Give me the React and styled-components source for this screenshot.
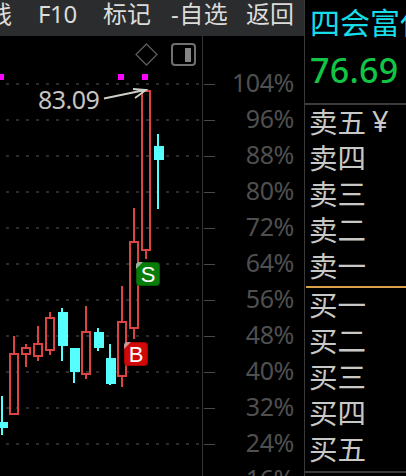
import styled, { createGlobalStyle } from "styled-components";

const GlobalStyle = createGlobalStyle`
    body {
        margin: 0;
        background: #000;
        overflow: hidden;
    }
`
const Screen = styled.div`
    display: grid;
    grid-template-columns: 304px 102px;
    width: 406px;
    height: 476px;
    overflow: hidden;
    background: #000;
    font-family: "Noto Sans", "Noto Sans CJK SC", sans-serif;
`
const Main = styled.main`
    display: flex;
    flex-direction: column;
    min-width: 0;
    height: 476px;
    overflow: hidden;
`
const Toolbar = styled.nav`
    display: flex;
    flex: none;
    box-sizing: border-box;
    height: 36px;
    margin-left: -12px;
    background: #2b2c2d;
`
const ToolItem = styled.span`
    flex: none;
    width: ${props => props.$width}px;
    font-size: 24px;
    line-height: 28px;
    letter-spacing: ${props => props.$spacing || 0}px;
    white-space: nowrap;
    color: #dcdcda;
`
const ChartArea = styled.div`
    display: flex;
    height: 440px;
`
const Plot = styled.svg`
    display: block;
    flex: none;
`
const Axis = styled.div`
    box-sizing: border-box;
    width: 102px;
    padding-top: 28px;
    border-left: 1px solid #353535;
`
const AxisRow = styled.div`
    display: flex;
    align-items: center;
    justify-content: space-between;
    height: 36px;
    padding: 0 10px 0 1px;
    font-size: 25px;
    line-height: 36px;
    letter-spacing: -0.4px;
    color: #4f4f4f;
`
const Tick = styled.i`
    width: 11px;
    height: 1px;
    margin-top: 4px;
    background: #4a4a4a;
`
const Quote = styled.aside`
    display: flex;
    flex-direction: column;
    box-sizing: border-box;
    height: 476px;
    overflow: hidden;
    border-left: 1px solid #3a3a3a;
`
const StockName = styled.div`
    height: 45px;
    padding-left: 5px;
    font-size: 30px;
    line-height: 45px;
    white-space: nowrap;
    color: #18dce8;
`
const Price = styled.div`
    height: 58px;
    padding-left: 5px;
    font-size: 34px;
    font-weight: 500;
    line-height: 51px;
    letter-spacing: 0.3px;
    color: #13c544;
`
const Rule = styled.div`
    flex: none;
    height: 2px;
    margin: ${props => props.$margin || "0"};
    background: ${props => props.$color || "#3b3b3b"};
`
const Level = styled.div`
    display: flex;
    flex: none;
    height: 36px;
    padding-left: 4px;
    font-size: 28.5px;
    line-height: 34px;
    white-space: nowrap;
    color: #c8c8c6;
`
const Currency = styled.span`
    margin-left: 6px;
    font-size: 29px;
    line-height: 32px;
`

const tools = [
    { label: "线", width: 50 },
    { label: "F10", width: 65, spacing: -0.4 },
    { label: "标记", width: 68 },
    { label: "-自选", width: 75, spacing: 0.5 },
    { label: "返回", width: 58 },
]
const percents = [104, 96, 88, 80, 72, 64, 56, 48, 40, 32, 24, 16]
const asks = ["五", "四", "三", "二", "一"]
const bids = ["一", "二", "三", "四", "五"]

// x is the centre of the candle, the rest are heights on the plot
const candles = [
    { x: 3, top: 422, bottom: 428, high: 396, low: 435 },
    { x: 14, top: 353, bottom: 415, high: 336, low: 415, up: true },
    { x: 26, top: 347, bottom: 355, high: 344, low: 367, up: true },
    { x: 38, top: 343, bottom: 357, high: 326, low: 361, up: true },
    { x: 50, top: 317, bottom: 351, high: 312, low: 355, up: true },
    { x: 63, top: 312, bottom: 346, high: 308, low: 361 },
    { x: 75, top: 348, bottom: 372, high: 348, low: 383 },
    { x: 86, top: 331, bottom: 375, high: 306, low: 379, up: true },
    { x: 99, top: 332, bottom: 348, high: 328, low: 351 },
    { x: 111, top: 358, bottom: 384, high: 344, low: 385 },
    { x: 122, top: 321, bottom: 377, high: 286, low: 387, up: true },
    { x: 134, top: 241, bottom: 329, high: 208, low: 339, up: true },
    { x: 146, top: 90, bottom: 251, high: 90, low: 259, up: true },
    { x: 159, top: 146, bottom: 160, high: 134, low: 209 },
]

function Candle({ x, top, bottom, high, low, up }) {
    if (!up) {
        return (<g fill="#55ffff">
            <rect x={x - 2} y={high} width="2" height={low - high} />
            <rect x={x - 5} y={top} width="10" height={bottom - top} />
        </g>)
    }
    return (<g stroke="#dc4442" strokeWidth="2" fill="none">
        <path d={`M${x} ${high}V${top}M${x} ${bottom}V${low}`} />
        <rect x={x - 4} y={top + 1} width="8" height={bottom - top - 2} />
    </g>)
}

function Marker({ x, y, color, edge, letter }) {
    return (<g>
        <rect x={x + 0.5} y={y + 0.5} width="23" height="23" rx="3" fill={color} stroke={edge} />
        <path d={`M${x} ${y + 7}V${y + 2}L${x + 2} ${y}H${x + 7}Z`} fill="#c9c9c9" opacity="0.75" />
        <text x={x + 12} y={y + 20} textAnchor="middle" fontFamily="Liberation Sans, sans-serif" fontSize="22" fill="#fff">{letter}</text>
    </g>)
}

function CandlePlot() {
    return (<Plot width="202" height="440" viewBox="0 36 202 440" shapeRendering="crispEdges">
        {percents.slice(0, -1).map((p, i) => (
            <path key={p} d={`M6 ${84 + i * 36}H202`} stroke="#2c2c2c" strokeWidth="2" strokeDasharray="3 7" />
        ))}
        <g fill="#ff00ff">
            <rect x="-2" y="74" width="6" height="6" />
            <rect x="118" y="74" width="6" height="6" />
            <rect x="142" y="74" width="6" height="6" />
        </g>
        <g fill="none" stroke="#5c5c5c" shapeRendering="auto">
            <path d="M146.5 44L157 54.5L146.5 65L136 54.5Z" strokeWidth="1.3" />
            <rect x="172" y="44" width="23" height="21" rx="3" stroke="#707070" strokeWidth="2" />
            <rect x="185" y="48" width="6" height="14" fill="#858585" stroke="none" />
        </g>
        {candles.map(c => <Candle key={c.x} {...c} />)}
        <g shapeRendering="auto">
            <text x="38" y="109" fontSize="25" letterSpacing="-0.5" fill="#c4c4c2">83.09</text>
            <path d="M104 98.5L145 90M133 89L146 90L135 98" fill="none" stroke="#ccd0c8" strokeWidth="1.8" />
            <Marker x={136} y={262} color="#087c08" edge="#065c06" letter="S" />
            <Marker x={124} y={342} color="#d00808" edge="#a80404" letter="B" />
        </g>
    </Plot>)
}

function App() {
    return (<>
        <GlobalStyle />
        <Screen>
            <Main>
                <Toolbar>
                    {tools.map(t => (
                        <ToolItem key={t.label} $width={t.width} $spacing={t.spacing}>{t.label}</ToolItem>
                    ))}
                </Toolbar>
                <ChartArea>
                    <CandlePlot />
                    <Axis>
                        {percents.map(p => (
                            <AxisRow key={p}><Tick /><span>{p}%</span></AxisRow>
                        ))}
                    </Axis>
                </ChartArea>
            </Main>
            <Quote>
                <StockName>四会富仕</StockName>
                <Price>76.69</Price>
                <Rule />
                {asks.map((n, i) => (
                    <Level key={n}>卖{n}{i === 0 && <Currency>¥</Currency>}</Level>
                ))}
                <Rule $color="#dda04b" $margin="1px 0 0 1px" />
                {bids.map(n => <Level key={n}>买{n}</Level>)}
                <Rule $margin="3px 0 0" />
            </Quote>
        </Screen>
    </>)
}

export default App
